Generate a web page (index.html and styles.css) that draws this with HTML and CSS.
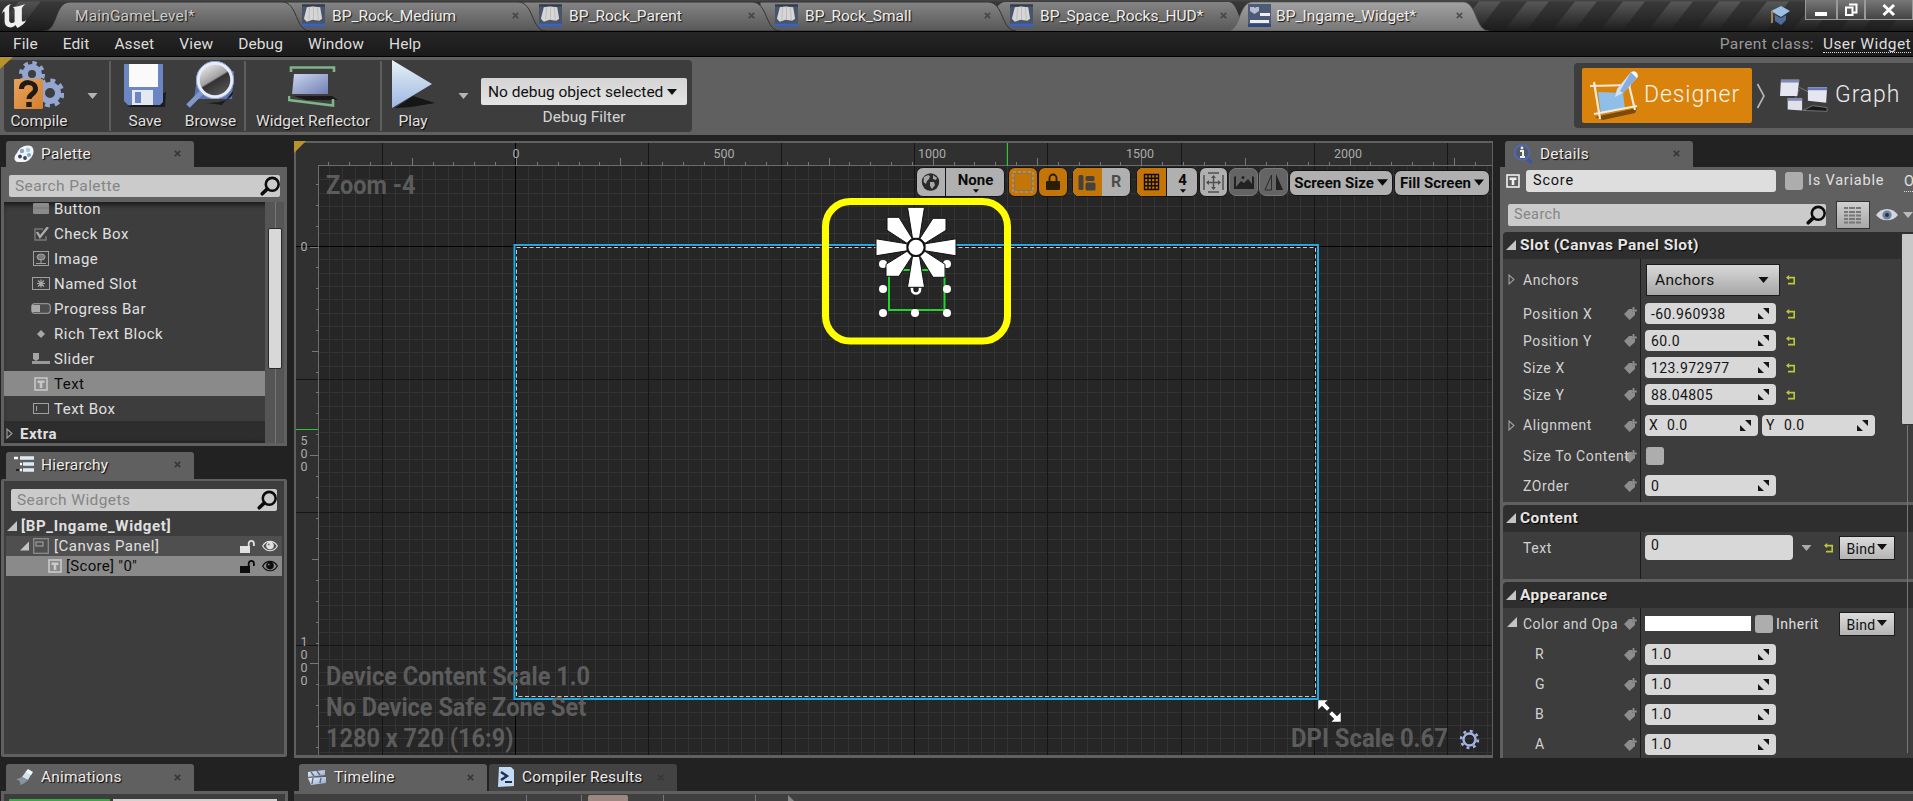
FILE: index.html
```html
<!DOCTYPE html>
<html lang="en">
<head>
<meta charset="utf-8">
<title>BP_Ingame_Widget</title>
<link rel="stylesheet" href="styles.css">
</head>
<body>
<svg width="0" height="0" class="defs">
  <defs>
    <linearGradient id="gTab" x1="0" y1="0" x2="0" y2="1"><stop offset="0" stop-color="#848484"/><stop offset="1" stop-color="#585858"/></linearGradient>
    <linearGradient id="gAct" x1="0" y1="0" x2="0" y2="1"><stop offset="0" stop-color="#a2a2a2"/><stop offset="1" stop-color="#777"/></linearGradient>
    <linearGradient id="gDark" x1="0" y1="0" x2="0" y2="1"><stop offset="0" stop-color="#222" stop-opacity="0"/><stop offset="1" stop-color="#1c1c1c"/></linearGradient>
    <linearGradient id="gBlue" x1="0" y1="0" x2="1" y2="1"><stop offset="0" stop-color="#f2f8fd"/><stop offset="1" stop-color="#8fa2c8"/></linearGradient>
    <linearGradient id="gBlue2" x1="0" y1="0" x2="1" y2="1"><stop offset="0" stop-color="#ccd6f0"/><stop offset="1" stop-color="#6f7fb2"/></linearGradient>
    <linearGradient id="gLens" x1="0" y1="0" x2=".6" y2="1"><stop offset="0" stop-color="#fff"/><stop offset=".55" stop-color="#a0a0a0"/><stop offset=".6" stop-color="#333"/><stop offset="1" stop-color="#555"/></linearGradient>
    <linearGradient id="gOr" x1="0" y1="0" x2="1" y2="1"><stop offset="0" stop-color="#e8a35c"/><stop offset="1" stop-color="#d27f2e"/></linearGradient>
    <symbol id="close" viewBox="0 0 7 7"><path d="M.8.8 6.2 6.2M6.2.8.8 6.2" stroke="#383838" stroke-width="1.7"/></symbol>
    <symbol id="bp" viewBox="0 0 24 23"><rect width="24" height="23" fill="#4a5468"/><rect width="24" height="2" fill="#323a4c"/><rect y="20" width="24" height="3" fill="#3c62c0"/><path d="M5 3 11 2 19 3 21 15 18 17 11 16 5 18 2 15Z" fill="#d6d6d6"/><path d="M8 3 7 16M12 2V16M16 3 17 16" stroke="#b8b8b8" stroke-width=".9"/></symbol>
    <symbol id="mag" viewBox="0 0 18 18"><circle cx="11" cy="7.500" r="5.800" fill="none" stroke="#0c0c0c" stroke-width="2.300"/><path d="M6.600 11.600 2 16" stroke="#0c0c0c" stroke-width="3.200" stroke-linecap="round"/></symbol>
    <symbol id="ticon" viewBox="0 0 14 14"><rect x="1" y="1" width="12" height="12" fill="none" stroke="currentColor" stroke-width="1.6"/><path d="M3.500 3.600H10.500V6H8.300V11H5.700V6H3.500Z" fill="currentColor"/></symbol>
    <symbol id="tri" viewBox="0 0 10 10"><path d="M10 0V10H0Z" fill="#c4c4c4"/></symbol>
    <symbol id="triopen" viewBox="0 0 7 11"><path d="M1 1V10L6 5.500Z" fill="none" stroke="#a0a0a0" stroke-width="1.100"/></symbol>
    <symbol id="down" viewBox="0 0 10 6"><path d="M0 0H10L5 6Z" fill="currentColor"/></symbol>
    <symbol id="lock" viewBox="0 0 15 13"><path d="M0 6H10V13H0Z" fill="currentColor"/><path d="M8.700 7V3.500A2.600 2.600 0 0 1 13.900 3.500V6" fill="none" stroke="currentColor" stroke-width="1.800"/></symbol>
    <symbol id="eye" viewBox="0 0 16 12"><path d="M.7 6C4-.3 12-.3 15.300 6 12 12.300 4 12.300 .7 6Z" fill="none" stroke="currentColor" stroke-width="1.200"/><circle cx="8" cy="5.600" r="3.800" fill="currentColor"/><circle cx="6.800" cy="4.600" r="1" fill="#777"/></symbol>
    <symbol id="tag" viewBox="0 0 13 13"><path d="M0 7 5 2H8V5H11V8L5.500 13Z" fill="#8d8d8d"/><path d="M9.500 0V7M6.500 3.500H12.800" stroke="#8d8d8d" stroke-width="1.800"/></symbol>
    <symbol id="spin" viewBox="0 0 11 11"><path d="M5 0H11V6ZM0 5V11H6Z" fill="#161616"/></symbol>
    <symbol id="reset" viewBox="0 0 10 10"><path d="M1.500 2.600H8.200V8.600H2" fill="none" stroke="#bcc83a" stroke-width="1.600"/><path d="M0 2.600 3.200 0V5.200Z" fill="#bcc83a"/></symbol>
    <symbol id="clap" viewBox="0 0 20 17"><path d="M1 3 18 1 18 6 1 8Z" fill="url(#gBlue)"/><path d="M1 9 19 8V14L4 16Z" fill="url(#gBlue)"/><path d="M4 3 7 7M10 2 13 6M6 9 5 15M14 9 13 14" stroke="#5a6a90" stroke-width="1.400"/></symbol>
  </defs>
</svg>

<div class="titlebar">
  <svg class="strip" width="1913" height="31">
    <rect width="1913" height="31" fill="#3a3a3a"/>
    <g id="stripes"></g>
    <rect width="1913" height="31" fill="url(#gDark)"/>
    <path d="M980 31C994 31 991 2 1006 2H1228C1240 2 1238 31 1252 31Z" fill="url(#gTab)"/>
    <path d="M760 31V2H988C1004 2 1001 31 1016 31Z" fill="url(#gTab)" stroke="#333"/>
    <path d="M520 31V2H752C768 2 765 31 780 31Z" fill="url(#gTab)" stroke="#333"/>
    <path d="M280 31V2H518C534 2 531 31 546 31Z" fill="url(#gTab)" stroke="#333"/>
    <path d="M44 31C58 31 54 2 70 2H282C298 2 295 31 310 31Z" fill="url(#gTab)" stroke="#333"/>
    <path d="M1227 31C1241 31 1238 2 1253 2H1463C1477 2 1475 31 1489 31Z" fill="url(#gAct)" stroke="#555" stroke-width=".7"/>
    <rect y="0" width="1913" height="1.500" fill="#444"/>
  </svg>
  <svg class="logo" width="29" height="24" viewBox="0 0 32 24" preserveAspectRatio="none"><path d="M1 10C2 5 6 1 11 0 9 2 9 3 9 5V17C10 19 12 20 15 18V6C15 4 14 4 13 3 17 3 21 2 27 0 23 3 23 4 23 7V16C23 18 25 18 28 16 26 20 22 22 18 24L16 21C14 23 11 24 8 23 5 22 4 20 4 17V9C4 7 3 7 1 10Z" fill="#f0f0f0"/></svg>
  <div class="tabs">
    <div class="tab t1"><span>MainGameLevel*</span></div>
    <div class="tab t2"><svg width="23" height="23"><use href="#bp"/></svg><span>BP_Rock_Medium</span><svg class="x"><use href="#close"/></svg></div>
    <div class="tab t3"><svg width="23" height="23"><use href="#bp"/></svg><span>BP_Rock_Parent</span><svg class="x"><use href="#close"/></svg></div>
    <div class="tab t4"><svg width="23" height="23"><use href="#bp"/></svg><span>BP_Rock_Small</span><svg class="x"><use href="#close"/></svg></div>
    <div class="tab t5"><svg width="23" height="23"><use href="#bp"/></svg><span>BP_Space_Rocks_HUD*</span><svg class="x"><use href="#close"/></svg></div>
    <div class="tab t6"><svg width="23" height="23" viewBox="0 0 23 23"><rect width="23" height="23" fill="#4d5a78"/><path d="M2 3H6L7 4 8 3H11V7L6.500 10 2 7Z" fill="#b8bccc"/><path d="M12 9H22V12H12ZM2 16H21V19H2Z" fill="#eee"/><rect y="20" width="23" height="3" fill="#30477e"/></svg><span>BP_Ingame_Widget*</span><svg class="x"><use href="#close"/></svg></div>
  </div>
  <div class="winctl">
    <svg class="cap" width="20" height="20" viewBox="0 0 20 20"><path d="M1 5 11 0 20 5 11 11Z" fill="#9cc0e6"/><path d="M5 9V15L11 19 16 14V9L11 12Z" fill="#4e6d99"/><path d="M2 5V17" stroke="#a98a5c" stroke-width="1.800"/></svg>
    <div class="wb w1"><svg width="14" height="14"><path d="M1 9H13V13H1Z" fill="#fff"/></svg></div>
    <div class="wb w2"><svg width="14" height="14"><path d="M5 1.500H12.500V9.500H9M2 4.500H8.500V12H2Z" fill="none" stroke="#fff" stroke-width="2"/></svg></div>
    <div class="wb w3"><svg width="14" height="14"><path d="M1.500 2 12 12M12 2 1.500 12" stroke="#fff" stroke-width="3"/></svg></div>
  </div>
</div>

<div class="menubar">
  <span>File</span><span>Edit</span><span>Asset</span><span>View</span><span>Debug</span><span>Window</span><span>Help</span>
  <div class="parent"><em>Parent class:</em><a>User Widget</a></div>
</div>

<div class="toolbar">
  <svg class="corner" width="14" height="12"><path d="M0 0H13L0 12Z" fill="#b8922a"/></svg>
  <div class="tools">
    <div class="tool compile">
      <svg width="50" height="50" viewBox="0 0 50 50"><g fill="none" stroke="#93a6cf"><circle cx="18" cy="14" r="7" stroke-width="6"/><circle cx="18" cy="14" r="11" stroke-width="4" stroke-dasharray="4.300 4.340"/><circle cx="36" cy="33" r="8" stroke-width="6"/><circle cx="36" cy="33" r="12" stroke-width="5" stroke-dasharray="4.700 4.720"/></g><rect x="0" y="19" width="29" height="30" rx="1" fill="url(#gOr)"/><path d="M7.500 29C7.500 20 21.500 21 21.500 29 21.500 34 15 34 15 39" fill="none" stroke="#1e1a16" stroke-width="5"/><rect x="12.300" y="42" width="5.400" height="5" fill="#1e1a16"/></svg>
      <span>Compile</span></div>
    <svg class="dd d1" width="11" height="6"><use href="#down"/></svg>
    <i class="sep"></i>
    <div class="tool save">
      <svg width="42" height="46" viewBox="0 0 42 46"><path d="M3 45H41L42 30Z" fill="#1c1c1c"/><path d="M0 2H39V40L36 43H4L0 39Z" fill="#6c86c4"/><path d="M5 2H34V25H5Z" fill="#fafafa"/><path d="M8 28H29V43H8Z" fill="#e4e8f0"/><path d="M11 30H17V41H11Z" fill="#6c86c4"/></svg>
      <span>Save</span></div>
    <div class="tool browse">
      <svg width="50" height="48" viewBox="0 0 50 48"><path d="M12 10H48L46 38H8Z" fill="#5b73b0"/><path d="M20 42C36 42 48 38 47 30L36 44Z" fill="#1c1c1c"/><path d="M16 31 2 45" stroke="#8097cc" stroke-width="5"/><circle cx="29" cy="19" r="17" fill="url(#gLens)" stroke="#e6edf8" stroke-width="3.500"/><circle cx="29" cy="19" r="18.600" fill="none" stroke="#8ea4d4" stroke-width="1"/></svg>
      <span>Browse</span></div>
    <i class="sep"></i>
    <div class="tool reflector">
      <svg width="50" height="42" viewBox="0 0 50 42"><path d="M6 30H44L50 34H18Z" fill="#191919"/><path d="M6 8H40V28H4Z" fill="url(#gBlue2)"/><path d="M3 6V1.500H46V6" fill="none" stroke="#7db489" stroke-width="2.600"/><path d="M1 30V34L45 39.500V33" fill="none" stroke="#7db489" stroke-width="2.600"/></svg>
      <span>Widget Reflector</span></div>
    <i class="sep"></i>
    <div class="tool play">
      <svg width="44" height="50" viewBox="0 0 44 50"><path d="M4 48 22 36 44 43 20 47Z" fill="#161616"/><path d="M1 0 41 24 1 48Z" fill="url(#gPlay)"/><defs><linearGradient id="gPlay" x1="0" y1="0" x2="0" y2="1"><stop offset="0" stop-color="#e6f2f5"/><stop offset="1" stop-color="#9fb6e2"/></linearGradient></defs></svg>
      <span>Play</span></div>
    <svg class="dd d2" width="11" height="6"><use href="#down"/></svg>
    <div class="filter"><div class="combo">No debug object selected<svg width="10" height="6"><use href="#down"/></svg></div><span>Debug Filter</span></div>
  </div>
  <div class="modes">
    <div class="mode active">
      <svg width="50" height="50" viewBox="0 0 50 50"><path d="M6 46 48 37 46 42 14 49Z" fill="#7a4a08"/><path d="M9 21 34 22 36 38 12 43Z" fill="#8fbfe8"/><path d="M1 15 42 14M5 11 11 48M5 43 48 35M40 14 46 39" stroke="#f4ead8" stroke-width="2.200"/><path d="M26 26 28 18 42 1C47-1 50 3 48 7L34 22Z" fill="#cfe2f6"/><path d="M42 1 48 7 34 22 31 20Z" fill="#86aee0"/><path d="M42 1C47-1 50 3 48 7Z" fill="#fff"/></svg>
      <span>Designer</span></div>
    <svg class="chev" width="10" height="26"><path d="M1.500 1 8 13 1.500 25" fill="none" stroke="#b8b8b8" stroke-width="1.600"/></svg>
    <div class="mode">
      <svg width="50" height="36" viewBox="0 0 52 36"><path d="M20 9 32 15M20 11 16 20M24 33 34 28 49 30V34Z" fill="#1a1a1a" stroke="#777" stroke-width="1"/><path d="M1 1H20L18 18H0Z" fill="#e6e6f0"/><path d="M1 1H20V4H1Z" fill="#8088b8"/><path d="M29 9H49L48 25 29 23Z" fill="#e6e6f0"/><path d="M29 9H49V12H29Z" fill="#6a78b8"/><path d="M8 20H23V33L8 32Z" fill="#e0e0ea"/><path d="M8 20H23V23H8Z" fill="#8088b8"/></svg>
      <span>Graph</span></div>
  </div>
</div>

<div class="workspace">
  <div class="left">
    <div class="ptab"><svg width="20" height="18" viewBox="0 0 20 18"><path d="M3 8C5 2 12-1 17 1 21 4 20 10 16 14 13 18 8 17 4 17 0 17-1 12 3 8Z" fill="#f2f6fb"/><circle cx="8" cy="6" r="2.200" fill="#7ca7d4"/><circle cx="14" cy="5" r="2.200" fill="#a9c9e8"/><circle cx="15" cy="10" r="2" fill="#7ca7d4"/><circle cx="6" cy="11.500" r="1.900" fill="#3a4656"/><circle cx="11" cy="13" r="1.900" fill="#3a4656"/></svg><span>Palette</span><svg class="x"><use href="#close"/></svg></div>
    <div class="palette">
      <div class="search">Search Palette<svg width="20" height="20"><use href="#mag"/></svg></div>
      <div class="plist">
        <div class="rows">
          <div class="row"><b><svg width="16" height="11"><rect width="16" height="11" rx="1" fill="#8a8a8a"/><path d="M0 5H16" stroke="#757575"/></svg></b>Button</div>
          <div class="row"><b><svg width="15" height="14"><path d="M9 2H1V13H12V9" fill="none" stroke="#777" stroke-width="1.500"/><path d="M3 5 6 10 14 0" fill="none" stroke="#aaa" stroke-width="2.400"/></svg></b>Check Box</div>
          <div class="row"><b><svg width="16" height="15"><rect x=".5" y=".5" width="15" height="14" fill="none" stroke="#a0a0a0"/><ellipse cx="8" cy="6" rx="4" ry="3" fill="#7a7a7a" stroke="#a5a5a5"/><path d="M8 8V12M3 12.500H13" stroke="#a0a0a0"/></svg></b>Image</div>
          <div class="row"><b><svg width="18" height="13"><rect x=".5" y=".5" width="17" height="12" fill="none" stroke="#a0a0a0"/><path d="M9 2.500V10.500M5 6.500H13M6 3.500 12 9.500M12 3.500 6 9.500" stroke="#a8a8a8" stroke-width="1.200"/></svg></b>Named Slot</div>
          <div class="row"><b><svg width="20" height="11"><rect x=".7" y=".7" width="18.600" height="9.600" rx="3" fill="#4c4c4c" stroke="#909090" stroke-width="1.300"/><rect x="1" y="2" width="8" height="7" fill="#aaa"/></svg></b>Progress Bar</div>
          <div class="row"><b><svg width="8" height="8"><path d="M4 0 8 4 4 8 0 4Z" fill="#a8a8a8"/></svg></b>Rich Text Block</div>
          <div class="row"><b><svg width="18" height="12"><path d="M0 8H18V11H0Z" fill="#999"/><path d="M1 0H7V6L4 8 1 6Z" fill="#a5a5a5"/></svg></b>Slider</div>
          <div class="row sel"><b><svg width="14" height="14" color="#c6c6c6"><use href="#ticon"/></svg></b>Text</div>
          <div class="row"><b><svg width="16" height="11"><rect x=".5" y=".5" width="15" height="10" fill="none" stroke="#a0a0a0"/><path d="M3.500 3V8" stroke="#a0a0a0"/></svg></b>Text Box</div>
          <div class="row cat"><svg width="7" height="11"><use href="#triopen"/></svg>Extra</div>
        </div>
        <div class="scroll"><div class="thumb"></div></div>
      </div>
    </div>
    <div class="ptab h"><svg width="20" height="17" viewBox="0 0 20 17"><path d="M6 2H20M9 8H20M9 14H20" stroke="#dfeaf6" stroke-width="3.400"/><path d="M0 2H4M6 8H8M6 14H8" stroke="#fff" stroke-width="2.600"/><path d="M2 14H5" stroke="#222" stroke-width="2"/></svg><span>Hierarchy</span><svg class="x"><use href="#close"/></svg></div>
    <div class="hier">
      <div class="search">Search Widgets<svg width="20" height="20"><use href="#mag"/></svg></div>
      <div class="hr root"><svg width="10" height="10"><use href="#tri"/></svg>[BP_Ingame_Widget]</div>
      <div class="hr canvasrow"><svg width="9" height="10"><use href="#tri"/></svg><svg class="ci" width="16" height="16"><rect x=".7" y=".7" width="14.600" height="14.600" fill="none" stroke="#8c8c8c" stroke-width="1.300"/><rect x="3" y="4" width="7" height="4" fill="none" stroke="#aaa"/></svg>[Canvas Panel]<span class="ic"><svg width="15" height="13"><use href="#lock"/></svg><svg width="16" height="12"><use href="#eye"/></svg></span></div>
      <div class="hr scorerow"><svg class="ci" width="14" height="14" color="#cacaca"><use href="#ticon"/></svg>[Score] "0"<span class="ic"><svg width="15" height="13"><use href="#lock"/></svg><svg width="16" height="12"><use href="#eye"/></svg></span></div>
    </div>
    <div class="ptab a"><svg width="20" height="18" viewBox="0 0 20 18"><path d="M8 9 13 2 18 5 14 12Z" fill="#cfe0ee"/><path d="M14 1 19 4 17 7 12 4Z" fill="#f4f8fc"/><path d="M1 12C5 11 7 14 6 17 10 16 12 14 14 12L8 9Z" fill="#8a949c"/></svg><span>Animations</span><svg class="x"><use href="#close"/></svg></div>
    <div class="anim"><i></i><em></em></div>
  </div>

  <div class="center">
    <div class="viewport">
      <svg id="grid" width="1196" height="612" viewBox="296 143 1196 612"></svg>
      <div class="vtools">
        <div class="vg g1"><u><svg width="19" height="20"><circle cx="9.500" cy="10" r="8.700" fill="#2a2a2a"/><path d="M3 5 7 3 9 4 8 7 6 9 5 12 2.500 10ZM12 3 16 6 15 8 12 7ZM9 10 13 10 14 13 11 17 9 14Z" fill="#a8a8a8"/></svg></u><u class="txt">None<svg width="6" height="4"><use href="#down"/></svg></u></div>
        <div class="vg or g2"><svg width="22" height="22"><rect x="2.500" y="2.500" width="17" height="17" fill="none" stroke="#8e7650" stroke-width="1.200"/><rect x="1" y="1" width="20" height="20" fill="none" stroke="#a8987c" stroke-width="1.500" stroke-dasharray="3 2"/></svg></div>
        <div class="vg or g3"><svg width="14" height="18"><rect y="8" width="14" height="9" rx="1" fill="#2b1c05"/><path d="M3.500 9V5A3.500 3.500 0 0 1 10.500 5V9" fill="none" stroke="#2b1c05" stroke-width="1.800"/></svg></div>
        <div class="vg g4"><u class="or"><svg width="18" height="17"><rect x=".5" y="1" width="5" height="15" rx="1.500" fill="#45423e"/><rect x="7.500" y="2" width="9" height="5" rx="1.500" fill="#45423e"/><rect x="7.500" y="8.500" width="10" height="8" rx="1.500" fill="#45423e"/></svg></u><u class="r">R</u></div>
        <div class="vg g5"><u class="or"><svg width="17" height="18"><path d="M1.500 1V17M5 1V17M8.500 1V17M12 1V17M15.500 1V17M1 1.500H16M1 5.200H16M1 9H16M1 12.700H16M1 16.500H16" stroke="#120c02" stroke-width="1.400"/></svg></u><u class="txt">4<svg width="6" height="4"><use href="#down"/></svg></u></div>
        <div class="vg g6"><svg width="21" height="21" viewBox="0 0 21 21"><path d="M1 3V18M20 3V18M5 1H16M5 20H16M4 10.500H17M10.500 4V17" stroke="#505050" stroke-width="1.500"/><path d="M3 10.500 6 8V13ZM18 10.500 15 8V13ZM10.500 3 8 6H13ZM10.500 18 8 15H13Z" fill="#505050"/></svg></div>
        <div class="vg dk g7"><svg width="20" height="15"><path d="M0 2 2 1V12H18V1L20 2V14H0Z" fill="#222"/><path d="M2 12 7 6 10 8 14 4 18 9V12Z" fill="#222"/><circle cx="9" cy="2.500" r="1.500" fill="#222"/></svg></div>
        <div class="vg dk g8"><svg width="20" height="17"><path d="M7.500 1V16H1Z" fill="none" stroke="#2a2a2a"/><path d="M12 0 19 16H12Z" fill="#222"/></svg></div>
        <div class="vg sm g9">Screen Size<svg width="11" height="7"><use href="#down"/></svg></div>
        <div class="vg sm g10">Fill Screen<svg width="10" height="7"><use href="#down"/></svg></div>
      </div>
      <div class="wm zoom">Zoom -4</div>
      <div class="wm info">Device Content Scale 1.0<br>No Device Safe Zone Set<br>1280 x 720 (16:9)</div>
      <div class="wm dpi">DPI Scale 0.67</div>
      <svg class="gear" width="21" height="21" viewBox="0 0 21 21"><circle cx="10.500" cy="10.500" r="6" fill="none" stroke="#a6b2e2" stroke-width="2.400"/><circle cx="10.500" cy="10.500" r="8.400" fill="none" stroke="#a6b2e2" stroke-width="2.600" stroke-dasharray="2.900 3.700"/></svg>
    </div>
  </div>

  <div class="right">
    <div class="ptab d"><svg width="20" height="20" viewBox="0 0 20 20"><path d="M13 14 19 19" stroke="#3e56a8" stroke-width="3"/><circle cx="9" cy="8.500" r="7.400" fill="#525a68" stroke="#4c6bb8" stroke-width="1.800"/><path d="M7 7H10V13M7 13H12" stroke="#f0f0f0" stroke-width="2" fill="none"/><circle cx="9" cy="4" r="1.400" fill="#f0f0f0"/></svg><span>Details</span><svg class="x"><use href="#close"/></svg></div>
    <div class="details">
      <div class="dh">
        <div class="dname"><svg width="14" height="14" color="#f0f0f0"><use href="#ticon"/></svg><div class="namebox">Score</div><i class="cb"></i><span>Is Variable</span><a>Open</a></div>
        <div class="dsearch"><div class="search">Search<svg width="20" height="20"><use href="#mag"/></svg></div><div class="gridbtn"><svg width="18" height="18"><path d="M0 2H4M5 2H11M12 2H17M0 6H4M5 6H11M12 6H17M0 9.500H4M5 9.500H11M12 9.500H17M0 13H4M5 13H11M12 13H17M0 16.500H4M5 16.500H11M12 16.500H17" stroke="#777" stroke-width="2"/></svg></div><svg class="bigeye" width="22" height="14" viewBox="0 0 22 14"><path d="M0 7C5-1 17-1 22 7 17 14 5 14 0 7Z" fill="#d4d6da"/><circle cx="11" cy="7" r="4.600" fill="#6d83a6"/><circle cx="11" cy="7" r="2" fill="#26334a"/></svg><svg width="10" height="6" color="#bbb"><use href="#down"/></svg></div>
      </div>
      <div class="sect"><svg width="10" height="10"><use href="#tri"/></svg>Slot (Canvas Panel Slot)</div>
      <div class="body b1">
        <div class="pr anc"><svg class="exp" width="7" height="11"><use href="#triopen"/></svg><label>Anchors</label><div class="val"><div class="abtn">Anchors<svg width="11" height="6"><use href="#down"/></svg></div><svg class="rs" width="10" height="10"><use href="#reset"/></svg></div></div>
        <div class="pr"><label>Position X</label><svg class="tg"><use href="#tag"/></svg><div class="val"><div class="num">-60.960938<svg><use href="#spin"/></svg></div><svg class="rs" width="10" height="10"><use href="#reset"/></svg></div></div>
        <div class="pr"><label>Position Y</label><svg class="tg"><use href="#tag"/></svg><div class="val"><div class="num">60.0<svg><use href="#spin"/></svg></div><svg class="rs" width="10" height="10"><use href="#reset"/></svg></div></div>
        <div class="pr"><label>Size X</label><svg class="tg"><use href="#tag"/></svg><div class="val"><div class="num">123.972977<svg><use href="#spin"/></svg></div><svg class="rs" width="10" height="10"><use href="#reset"/></svg></div></div>
        <div class="pr"><label>Size Y</label><svg class="tg"><use href="#tag"/></svg><div class="val"><div class="num">88.04805<svg><use href="#spin"/></svg></div><svg class="rs" width="10" height="10"><use href="#reset"/></svg></div></div>
        <div class="pr ali"><svg class="exp" width="7" height="11"><use href="#triopen"/></svg><label>Alignment</label><svg class="tg"><use href="#tag"/></svg><div class="val"><div class="num half"><s>X</s>0.0<svg><use href="#spin"/></svg></div><div class="num half"><s>Y</s>0.0<svg><use href="#spin"/></svg></div></div></div>
        <div class="pr stc"><label>Size To Content</label><svg class="tg"><use href="#tag"/></svg><div class="val"><i class="cb"></i></div></div>
        <div class="pr zo"><label>ZOrder</label><svg class="tg"><use href="#tag"/></svg><div class="val"><div class="num">0<svg><use href="#spin"/></svg></div></div></div>
      </div>
      <div class="sect s2"><svg width="10" height="10"><use href="#tri"/></svg>Content</div>
      <div class="body b2">
        <div class="pr"><label>Text</label><div class="val"><div class="tbox">0</div><svg class="tdd" width="11" height="6" color="#aaa"><use href="#down"/></svg><svg class="rs2" width="10" height="10"><use href="#reset"/></svg><div class="bind">Bind<svg width="10" height="6"><use href="#down"/></svg></div></div></div>
      </div>
      <div class="sect s2 s3"><svg width="10" height="10"><use href="#tri"/></svg>Appearance</div>
      <div class="body b3">
        <div class="pr col"><svg class="exp full" width="10" height="10"><use href="#tri"/></svg><label>Color and Opa</label><svg class="tg"><use href="#tag"/></svg><div class="val"><div class="swatch"></div><i class="cb"></i><span class="inh">Inherit</span><div class="bind">Bind<svg width="10" height="6"><use href="#down"/></svg></div></div></div>
        <div class="pr ch"><label>R</label><svg class="tg"><use href="#tag"/></svg><div class="val"><div class="num">1.0<svg><use href="#spin"/></svg></div></div></div>
        <div class="pr ch"><label>G</label><svg class="tg"><use href="#tag"/></svg><div class="val"><div class="num">1.0<svg><use href="#spin"/></svg></div></div></div>
        <div class="pr ch"><label>B</label><svg class="tg"><use href="#tag"/></svg><div class="val"><div class="num">1.0<svg><use href="#spin"/></svg></div></div></div>
        <div class="pr ch"><label>A</label><svg class="tg"><use href="#tag"/></svg><div class="val"><div class="num">1.0<svg><use href="#spin"/></svg></div></div></div>
      </div>
      <div class="dscroll"></div><div class="dline"></div>
    </div>
  </div>

  <div class="bottom">
    <div class="btabs">
      <div class="ptab"><svg width="20" height="17"><use href="#clap"/></svg><span>Timeline</span><svg class="x"><use href="#close"/></svg></div>
      <div class="ptab off"><svg width="18" height="20" viewBox="0 0 18 20"><path d="M2 0H14L17 3V19L1 20Z" fill="#c6daf4"/><path d="M4 5 10 9 4 13" fill="none" stroke="#1d2f55" stroke-width="2.400"/><path d="M8 15H15" stroke="#1d2f55" stroke-width="2"/></svg><span>Compiler Results</span><svg class="x"><use href="#close"/></svg></div>
    </div>
    <div class="bbody"><i></i><i class="p2"></i><em></em><i class="p3"></i><i class="p4"></i><svg class="pl" width="6" height="6"><path d="M0 0 6 6H0Z" fill="#888"/></svg></div>
  </div>
</div>
<script src="grid.js"></script>
</body>
</html>
```
FILE: grid.js
```js
// Builds the designer surface: grid, rulers, canvas outline and selected widget.
(function () {
  var out = [];
  var L = 319, T = 166, R = 1492, B = 755, OX = 515.5, OY = 246.5, step = 13.31;
  function rect(x, y, w, h, f) {
    out.push('<rect x="' + x + '" y="' + y + '" width="' + w + '" height="' + h + '" fill="' + f + '"/>');
  }
  function text(x, y, s) {
    out.push('<text x="' + x + '" y="' + y + '" text-anchor="middle" class="rl">' + s + '</text>');
  }
  rect(296, 143, 1196, 612, '#303030');
  rect(L, T, R - L, B - T, '#262626');
  var i, p;
  for (i = -14; i < 74; i++) { p = Math.floor(OX + i * step); if (i % 10 && p > L && p < R) rect(p, T, 1, B - T, '#333'); }
  for (i = -6; i < 39; i++) { p = Math.floor(OY + i * step); if (i % 10 && p > T && p < B) rect(L, p, R - L, 1, '#333'); }
  for (i = -1; i < 8; i++) rect(Math.floor(OX + i * step * 10), 143, 1, B - 143, i ? '#151515' : '#000');
  for (i = 0; i < 4; i++) rect(296, Math.floor(OY + i * step * 10), R - 296, 1, i ? '#151515' : '#000');
  rect(318, 165, R - 318, 1, '#6c6c6c');
  rect(318, 165, 1, B - 165, '#6c6c6c');
  for (i = -9; i < 47; i++) {
    p = Math.round(516 + i * 20.84);
    if (p < 320 || p > 1490) continue;
    var h = i % 10 === 0 ? 9 : i % 5 === 0 ? 8 : 4;
    rect(p, 166 - h, 1, h, '#777');
  }
  for (i = -3; i < 25; i++) {
    p = Math.round(246.6 + i * 20.84);
    if (p < 168 || p > 754) continue;
    var w = i % 10 === 0 ? 9 : i % 5 === 0 ? 7 : 3;
    rect(319 - w, p, w, 1, '#777');
  }
  text(516, 157.5, '0'); text(724, 157.5, '500'); text(932, 157.5, '1000'); text(1140, 157.5, '1500'); text(1348, 157.5, '2000');
  text(304, 251, '0');
  '500'.split('').forEach(function (c, k) { text(304, 445 + 13 * k, c); });
  '1000'.split('').forEach(function (c, k) { text(304, 646 + 13 * k, c); });
  rect(1006.8, 143, 1.2, 23, '#2fc435');
  rect(296, 429, 22, 1, '#2fc435');
  out.push('<path d="M294 141H306L294 153Z" fill="#b8922a"/>');

  // Canvas outline with its dashed safe line
  out.push('<rect x="514.500" y="245" width="803.500" height="454" fill="none" stroke="#1da9e2" stroke-width="2"/>');
  out.push('<rect x="516.500" y="247.500" width="799" height="449" fill="none" stroke="#c8c8c8" stroke-dasharray="4 2.500"/>');

  // Selected widget, its handles and the anchor medallion
  out.push('<rect x="889" y="270" width="55.500" height="40" fill="none" stroke="#22d32a" stroke-width="2"/>');
  [[883, 264], [947, 264], [883, 289], [947, 289], [883, 313], [915, 313], [947, 313]].forEach(function (c) {
    out.push('<circle cx="' + c[0] + '" cy="' + c[1] + '" r="4" fill="#fff"/>');
  });
  out.push('<path d="M912 286V289.500A4 4 0 0 0 920 289.500V286" fill="none" stroke="#fff" stroke-width="2.600"/>');
  for (i = 0; i < 4; i++) {
    out.push('<g transform="translate(916 247.300) rotate(' + i * 90 + ')" fill="#fff" stroke="#111" stroke-width="1">' +
      '<path d="M-8.500 -40H8.500L3.500 -9H-3.500Z"/><path d="M-29 -30H-17L-4 -9 -9 -4 -29 -17Z"/></g>');
  }
  out.push('<circle cx="916" cy="247.300" r="8.500" fill="#fff" stroke="#111" stroke-width="1.800"/>');
  out.push('<rect x="825.500" y="201.500" width="182" height="139.500" rx="25" fill="none" stroke="#ffff00" stroke-width="7"/>');

  // Resize arrows
  out.push('<path d="M1318 700H1328L1325 703 1330 708 1327 711 1322 706 1318 710ZM1341 722H1331L1334 719 1329 714 1332 711 1337 716 1341 712Z" fill="#fff" stroke="#222" stroke-width=".5"/>');
  document.getElementById('grid').innerHTML = out.join('');

  var s = '';
  for (i = 0; i < 12; i++) s += '<path d="M' + (1480 + i * 48) + ' 0h22l-24 31h-22z" fill="#5a5a5a"/>';
  s += '<path d="M20 0h22l-24 31h-22z" fill="#555"/>';
  document.getElementById('stripes').innerHTML = s;
})();
```
FILE: styles.css
```css
* { box-sizing: border-box; }
body { margin: 0; width: 1913px; height: 801px; overflow: hidden; background: #222; color: #e0e0e0; font: 15.5px/20px Roboto, "Liberation Sans", sans-serif; }
svg { display: block; flex: none; }
.defs { position: absolute; }
i, em, s, u { font-style: normal; text-decoration: none; }

.titlebar { position: relative; height: 31px; overflow: hidden; }
.strip { position: absolute; left: 0; top: 0; }
.logo { position: absolute; left: 1px; top: 4px; }
.tabs { position: relative; display: flex; height: 31px; padding-left: 75px; }
.tab { display: flex; align-items: center; color: #eee; text-shadow: 1px 1px 1px #111; white-space: nowrap; height: 31px; letter-spacing: 0; }
.tab .x { margin-left: auto; width: 7px; height: 7px; opacity: .7; }
.tab span { margin-left: 7px; }
.t1 { width: 227px; } .t1 span { margin-left: 0; color: #ccc; letter-spacing: .15px; }
.t2 { width: 217px; margin-right: 20px; }
.t3 { width: 216px; margin-right: 20px; }
.t4 { width: 216px; margin-right: 19px; }
.t5 { width: 217px; margin-right: 21px; }
.t6 { width: 215px; } .t6 span { margin-left: 5px; }
.winctl { position: absolute; right: 0; top: 0; display: flex; }
.cap { margin: 6px 15px 0 0; }
.wb { height: 20px; background: linear-gradient(#777, #444); border: 1px solid #999; border-top: 0; display: flex; align-items: center; justify-content: center; }
.w1 { width: 32px; } .w2 { width: 28px; } .w3 { width: 48px; }

.menubar { height: 26px; border-top: 1px solid #000; border-bottom: 1px solid #000; background: linear-gradient(#262626, #1a1a1a); display: flex; align-items: center; padding: 0 0 1px 13px; gap: 25px; color: #ddd; letter-spacing: .1px; }
.parent { margin-left: auto; display: flex; gap: 9px; padding-right: 2px; letter-spacing: .4px; }
.parent em { color: #999; }
.parent a { border-bottom: 1px dotted #ddd; line-height: 16px; height: 17px; margin-top: 2px; }

.toolbar { position: relative; height: 78px; background: #606060; display: flex; justify-content: space-between; }
.corner { position: absolute; left: 0; top: 0; }
.tools { display: flex; width: 688px; margin: 3px 0 3px 4px; background: #3d3d3d; border-radius: 4px; }
.tool { display: flex; flex-direction: column; align-items: center; justify-content: flex-end; white-space: nowrap; text-shadow: 1px 1px 1px #000; }
.tool span { height: 21px; margin-top: 1px; line-height: 20px; }
.compile { width: 70px; }
.dd { color: #b5b5b5; margin-top: 33px; }
.d1 { margin-left: 13px; width: 11px; }
.sep { width: 2px; background: #5e5e5e; margin: 1px 0; }
.d1 + .sep { margin-left: 11px; }
.save { width: 68px; }
.save svg { margin-bottom: 2px; }
.browse { width: 65px; padding-right: 2px; }
.browse svg { margin-bottom: 1px; }
.reflector { width: 134px; }
.reflector svg { margin-bottom: 2px; }
.play { width: 62px; }
.d2 { margin-left: 14px; }
.filter { margin-left: 12px; width: 206px; text-align: center; }
.combo { margin: 18px 0 2px; height: 27px; border-radius: 2px; background: linear-gradient(#d4d4d4, #e4e4e4); color: #111; display: flex; align-items: center; gap: 4px; padding-left: 7px; white-space: nowrap; }
.filter span { color: #d4d4d4; }
.modes { width: 339px; margin: 6px 0 7px; background: #3d3d3d; border-radius: 4px 0 0 4px; display: flex; align-items: center; padding-left: 8px; font-weight: 300; font-size: 23px; color: #eaeaea; }
.mode { display: flex; align-items: center; gap: 5px; }
.mode.active { width: 170px; height: 55px; background: #d9820c; border-radius: 2px; padding-left: 7px; color: #fbf3e4; }
.mode span { letter-spacing: .9px; margin-top: -2px; }
.chev { margin: 0 14px 0 4px; }

.workspace { display: grid; grid-template-columns: 294px 1206px 413px; grid-template-rows: 629px 37px; height: 666px; }
.left { grid-row: 1 / 3; padding: 6px 0 0 1px; }
.center { padding-top: 6px; }
.right { padding-top: 6px; }
.bottom { grid-column: 2 / 4; }

.ptab { width: 188px; height: 26px; margin-left: 5px; background: #606060; border-radius: 3px 3px 0 0; display: flex; align-items: center; padding: 0 13px 1px 8px; text-shadow: 1px 1px 1px #000; color: #ececec; letter-spacing: .2px; }
.ptab span { margin-left: 7px; }
.ptab .x { width: 7px; height: 7px; margin-left: auto; }
.ptab.h, .ptab.a { height: 27px; }
.ptab.h { margin-top: 6px; padding-bottom: 2px; }
.ptab.a { margin-top: 7px; }
.search { height: 22px; background: #cbcbcb; border-radius: 2px; color: #858585; display: flex; align-items: center; justify-content: space-between; padding: 0 0 0 6px; letter-spacing: .4px; }
.palette { width: 286px; height: 279px; background: #606060; padding: 8px 3px 3px; }
.palette .search { margin: 0 4px 5px 5px; }
.plist { height: 241px; overflow: hidden; display: flex; background: #3d3d3d; box-shadow: inset 0 5px 5px -2px #1a1a1a; }
.rows { width: 261px; margin-top: -6px; }
.row { height: 25px; display: flex; align-items: center; letter-spacing: .5px; font-size: 15px; }
.row b { width: 50px; padding-left: 24px; display: flex; justify-content: center; }
.row.sel { background: #8a8a8a; color: #0c0c0c; }
.row.cat { background: linear-gradient(#2d2d2d 70%, #1c1c1c); width: 280px; font-weight: bold; padding-left: 2px; gap: 7px; }
.scroll { width: 19px; background: linear-gradient(90deg, #555 10px, #777 10px, #777 11px, #555 11px); position: relative; z-index: 1; }
.thumb { width: 14px; height: 141px; margin: 26px 0 0 3px; background: #d8d8d8; border: 1px solid #2a2a2a; border-radius: 2px; }
.hier { width: 286px; height: 278px; border: 3px solid #606060; border-top-width: 2px; background: #3d3d3d; padding-top: 8px; border-radius: 2px; }
.hier .search { margin: 0 7px 0 7px; }
.hr { height: 20px; display: flex; align-items: center; margin: 0 2px; letter-spacing: .5px; font-size: 15px; position: relative; }
.hr.root { height: 25px; font-weight: bold; padding: 5px 0 0 1px; gap: 4px; letter-spacing: .65px; }
.canvasrow { background: #4f4f4f; padding-left: 14px; }
.canvasrow .ci { margin: 0 5px 0 4px; }
.scorerow { background: #8a8a8a; color: #0c0c0c; padding-left: 42px; letter-spacing: .3px; }
.scorerow .ci { margin-right: 4px; }
.ic { margin-left: auto; display: flex; gap: 7px; padding-right: 4px; align-items: center; }
.anim { width: 287px; height: 20px; border: 3px solid #606060; background: #3d3d3d; display: flex; padding: 5px; gap: 3px; }
.anim i { width: 101px; height: 10px; background: #3fa648; flex: none; }
.anim em { width: 164px; height: 10px; background: #d8d0d0; flex: none; }

.viewport { position: relative; width: 1199px; height: 617px; border: 2px solid #606060; border-right-width: 1px; border-bottom-width: 3px; }
#grid { position: absolute; left: 0; top: 0; overflow: visible; }
.rl { font: 12.500px Roboto, sans-serif; fill: #ababab; }
.vtools { position: absolute; left: 620px; top: 24px; height: 30px; display: flex; align-items: center; font-weight: bold; font-size: 15px; color: #0a0a0a; }
.vg { height: 30px; border-radius: 7px; background: #b0b0b0; border: 1px solid #151515; display: flex; align-items: center; justify-content: center; overflow: hidden; white-space: nowrap; }
.vg u { height: 30px; flex: none; display: flex; align-items: center; justify-content: center; }
.vg .txt { flex-direction: column; border-left: 1px solid #151515; line-height: 16px; padding-top: 0; }
.vg .txt svg { margin-top: 1px; }
.or { background: #c47508; }
.dk { background: #646464; border-color: #7a7a7a; }
.g1 { width: 89px; } .g1 u { width: 29px; } .g1 .txt { width: 60px; }
.g2 { width: 30px; margin-left: 3px; } .g3 { width: 30px; }
.g4 { width: 59px; margin-left: 4px; } .g4 u { width: 29px; } .g4 .r { color: #4c4c4c; font-size: 16px; }
.g5 { width: 62px; margin-left: 5px; } .g5 u { width: 30px; } .g5 .txt { width: 32px; }
.g6 { width: 29px; margin-left: 1px; }
.g7, .g8 { width: 29px; height: 28px; margin-left: 1px; }
.g9 { width: 104px; margin-left: 1px; } .g10 { width: 96px; margin-left: 1px; }
.vg.sm { height: 26px; gap: 3px; margin-top: 1px; }
.wm { position: absolute; color: #666; font: bold 25px/31px Roboto, sans-serif; white-space: nowrap; transform-origin: 0 0; transform: scaleX(.94); opacity: .85; }
.zoom { left: 30px; top: 27px; }
.info { left: 30px; top: 518px; }
.dpi { left: 995px; top: 580px; transform: scaleX(.955); }
.gear { position: absolute; left: 1163px; top: 586px; }

.ptab.d { height: 26px; }
.details { position: relative; width: 413px; height: 591px; background: #606060; padding: 0 0 3px 3px; overflow: hidden; letter-spacing: .8px; font-size: 14.500px; }
.dh { height: 65px; padding-top: 3px; }
.dname { display: flex; align-items: center; padding-left: 3px; height: 22px; white-space: nowrap; }
.namebox { width: 250px; height: 22px; margin: 0 9px 0 6px; background: #dedede; border-radius: 3px; color: #111; padding: 1px 7px; flex: none; }
.cb { width: 18px; height: 18px; border-radius: 3px; background: #adadad; flex: none; }
.dname span { margin-left: 5px; width: 96px; flex: none; }
.dname a { border-bottom: 1px dotted #ddd; height: 20px; margin-top: 1px; }
.dsearch { display: flex; align-items: center; margin-top: 9px; height: 28px; padding-left: 5px; }
.dsearch .search { width: 319px; }
.gridbtn { width: 34px; height: 28px; margin: 0 6px 0 10px; background: linear-gradient(#d0d0d0, #a8a8a8); border: 1px solid #333; display: flex; align-items: center; justify-content: center; }
.bigeye { margin-right: 5px; }
.sect { height: 27px; background: #2e2e2e; display: flex; align-items: center; gap: 4px; padding: 0 0 1px 3px; font-weight: bold; font-size: 15.500px; letter-spacing: .45px; text-shadow: 1px 1px 1px #000; border-radius: 4px 0 0 0; color: #e6e6e6; }
.s2 { margin-top: 3px; }
.s3 { height: 26px; }
.body { background: linear-gradient(90deg, #3d3d3d 137px, #1c1c1c 137px, #1c1c1c 138px, #3d3d3d 138px); font-size: 14px; letter-spacing: .6px; }
.b1 { height: 243px; }
.b2 { height: 47px; }
.b3 { height: 150px; }
.pr { height: 27px; display: grid; grid-template-columns: 137px 1fr; align-items: center; }
.pr label { grid-column: 1; grid-row: 1; padding-left: 20px; white-space: nowrap; color: #d2d2d2; z-index: 1; }
.pr .val { grid-column: 2; grid-row: 1; display: flex; align-items: center; padding-left: 5px; }
.tg { grid-column: 1; grid-row: 1; justify-self: end; width: 13px; height: 13px; margin-right: 3px; }
.exp { grid-column: 1; grid-row: 1; margin-left: 5px; }
.exp.full { margin: -4px 0 0 4px; }
.num { width: 131px; height: 21px; border-radius: 4px; background: #d8d8d8; color: #141414; display: flex; align-items: center; padding: 0 7px 0 6px; flex: none; letter-spacing: .4px; }
.num svg { width: 11px; height: 11px; margin-left: auto; }
.num.half { width: 113px; padding-left: 4px; margin-right: 4px; }
.num s { width: 18px; }
.rs { margin-left: 10px; }
.anc { height: 41px; }
.abtn { width: 134px; height: 32px; margin-left: 1px; border: 1px solid #1c1c1c; background: linear-gradient(#dadada, #a6a6a6); color: #111; display: flex; align-items: center; justify-content: space-between; padding: 0 10px 0 8px; font-size: 15.500px; letter-spacing: .3px; flex: none; }
.anc .rs { margin-left: 6px; }
.ali { height: 34px; }
.stc { height: 28px; }
.stc .cb { margin-left: 1px; }
.zo { height: 31px; }
.b2 .pr { height: 31px; }
.tbox { width: 148px; height: 25px; border-radius: 4px; background: #d8d8d8; color: #141414; padding: 0 6px; flex: none; }
.tdd { margin: 0 12px 0 8px; }
.bind { width: 56px; height: 24px; border: 1px solid #1c1c1c; background: linear-gradient(#dcdcdc, #b4b4b4); color: #111; display: flex; align-items: center; justify-content: center; gap: 2px; margin-left: 5px; flex: none; padding-top: 2px; letter-spacing: .3px; }
.bind svg { margin-top: -3px; }
.col { height: 31px; }
.col label { letter-spacing: .5px; }
.swatch { width: 106px; height: 15px; background: #fff; margin-right: 4px; flex: none; }
.inh { margin-left: 3px; width: 58px; letter-spacing: .5px; }
.ch { height: 30px; }
.ch label { padding-left: 32px; }
.dscroll { position: absolute; left: 401px; top: 66px; width: 14px; height: 192px; background: #c8c8c8; border: 1px solid #333; border-radius: 2px; }
.dline { position: absolute; left: 407px; top: 258px; width: 1px; height: 328px; background: #777; }

.btabs { display: flex; gap: 2px; }
.btabs .off { background: #434343; margin-left: 0; }
.btabs .ptab { height: 27px; }
.bbody { height: 10px; border-top: 3px solid #606060; background: #404040; display: flex; padding: 1px 0 0 232px; }
.bbody i { width: 1px; height: 8px; background: #777; }
.bbody .p2 { margin-left: 54px; }
.bbody em { width: 40px; height: 8px; margin-left: 6px; background: #9c8880; border-radius: 2px 2px 0 0; }
.bbody .p3 { margin-left: 35px; }
.bbody .p4 { margin-left: 91px; }
.bbody .pl { margin-left: 32px; }
```
